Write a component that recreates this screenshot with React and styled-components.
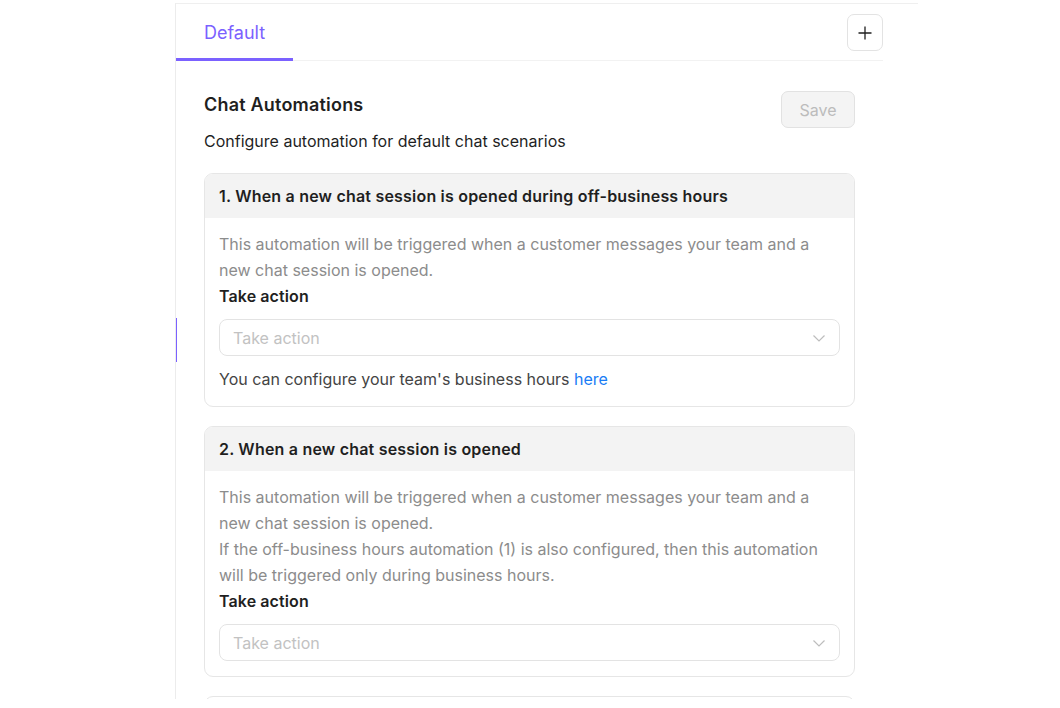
import React from "react"
import styled, { createGlobalStyle } from "styled-components"

const GlobalStyle = createGlobalStyle`
  body {
    margin: 0;
    background: #fff;
    font-family: Inter, "Open Sans", "Liberation Sans", sans-serif;
    color: #1f1f1f;
  }
`

const Page = styled.div`
  width: 1060px;
  height: 708px;
  overflow: hidden;
  background: #fff;
`

const Panel = styled.section`
  position: relative;
  margin: 3px 0 0 175px;
  width: 743px;
  height: 696px;
  border-top: 1px solid #efefef;
  border-left: 1px solid #ececec;
  box-sizing: border-box;
  overflow: hidden;
`

const ScrollMark = styled.span`
  position: absolute;
  left: -1px;
  top: 314px;
  width: 2px;
  height: 44px;
  background: #7b61ff;
`

const TabBar = styled.div`
  display: flex;
  align-items: center;
  justify-content: space-between;
  height: 56px;
  margin-right: 35px;
  border-bottom: 1px solid #f2f2f2;
`

const Tab = styled.button`
  align-self: stretch;
  display: flex;
  align-items: center;
  width: 117px;
  padding: 2px 0 0 28px;
  margin-bottom: -1px;
  border: none;
  border-bottom: 3px solid ${props => (props.active ? "#7b61ff" : "transparent")};
  background: none;
  font: inherit;
  font-size: 18px;
  color: ${props => (props.active ? "#7b61ff" : "#555")};
  cursor: pointer;
  box-sizing: border-box;
`

const IconButton = styled.button`
  display: flex;
  align-items: center;
  justify-content: center;
  width: 36px;
  height: 37px;
  margin-top: 1px;
  padding: 0;
  border: 1px solid #e3e3e3;
  border-radius: 7px;
  background: #fff;
  color: #1f1f1f;
  cursor: pointer;
`

const Content = styled.div`
  padding: 30px 63px 0 28px;
`

const HeaderRow = styled.div`
  display: flex;
  justify-content: space-between;
  align-items: flex-start;
`

const Title = styled.h2`
  margin: 0;
  padding-top: 1px;
  font-size: 18px;
  font-weight: 600;
  line-height: 26px;
  letter-spacing: 0.2px;
  color: #1f1f1f;
`

const SaveButton = styled.button`
  width: 74px;
  height: 37px;
  border: 1px solid #e2e2e2;
  border-radius: 7px;
  background: #f4f4f4;
  color: #bcbcbc;
  font: inherit;
  font-size: 16px;
`

const Subtitle = styled.p`
  margin: 1px 0 0;
  font-size: 16px;
  line-height: 24px;
  color: #1f1f1f;
`

const CardList = styled.div`
  display: flex;
  flex-direction: column;
  gap: 19px;
  margin-top: 20px;
`

const Card = styled.div`
  border: 1px solid #e6e6e6;
  border-radius: 9px;
  overflow: hidden;
  min-height: 44px;
`

const CardHead = styled.div`
  display: flex;
  align-items: center;
  height: 44px;
  padding: 0 14px;
  background: #f3f3f3;
  font-size: 16px;
  font-weight: 600;
  letter-spacing: 0.2px;
  color: #1f1f1f;
`

const CardBody = styled.div`
  padding: 13px 14px 15px;
`

const Muted = styled.p`
  margin: 0;
  font-size: 16px;
  line-height: 26px;
  color: #8c8c8c;
`

const Label = styled.div`
  font-size: 16px;
  font-weight: 600;
  line-height: 26px;
  letter-spacing: 0.1px;
  color: #1f1f1f;
`

const Select = styled.div`
  display: flex;
  align-items: center;
  justify-content: space-between;
  height: 37px;
  margin-top: 10px;
  padding: 0 13px;
  border: 1px solid #e3e3e3;
  border-radius: 8px;
  box-sizing: border-box;
  font-size: 16px;
  color: #c2c2c2;
`

const Note = styled.p`
  margin: 10px 0 -1px;
  font-size: 16px;
  line-height: 26px;
  color: #444;

  a {
    color: #1a7cf5;
    text-decoration: none;
  }
`

const Chevron = () => (
  <svg width="14" height="14" viewBox="0 0 14 14" fill="none">
    <path d="M1.5 4.5 7 10l5.5-5.5" stroke="#bdbdbd" strokeWidth="1.2" />
  </svg>
)

const Plus = () => (
  <svg width="16" height="16" viewBox="0 0 16 16" fill="none">
    <path d="M8 1.5v13M1.5 8h13" stroke="#1f1f1f" strokeWidth="1.3" />
  </svg>
)

const automations = [
  {
    title: "1. When a new chat session is opened during off-business hours",
    lines: [
      "This automation will be triggered when a customer messages your team and a new chat session is opened.",
    ],
    note: true,
  },
  {
    title: "2. When a new chat session is opened",
    lines: [
      "This automation will be triggered when a customer messages your team and a new chat session is opened.",
      "If the off-business hours automation (1) is also configured, then this automation will be triggered only during business hours.",
    ],
  },
]

const App = () => (
  <Page>
    <GlobalStyle />
    <Panel>
      <ScrollMark />
      <TabBar>
        <Tab active>Default</Tab>
        <IconButton aria-label="Add">
          <Plus />
        </IconButton>
      </TabBar>
      <Content>
        <HeaderRow>
          <Title>Chat Automations</Title>
          <SaveButton disabled>Save</SaveButton>
        </HeaderRow>
        <Subtitle>Configure automation for default chat scenarios</Subtitle>
        <CardList>
          {automations.map(item => (
            <Card key={item.title}>
              <CardHead>{item.title}</CardHead>
              <CardBody>
                {item.lines.map(line => (
                  <Muted key={line}>{line}</Muted>
                ))}
                <Label>Take action</Label>
                <Select>
                  <span>Take action</span>
                  <Chevron />
                </Select>
                {item.note && (
                  <Note>
                    You can configure your team's business hours <a href="#">here</a>
                  </Note>
                )}
              </CardBody>
            </Card>
          ))}
          {/* next card starts below the fold */}
          <Card />
        </CardList>
      </Content>
    </Panel>
  </Page>
)

export default App
